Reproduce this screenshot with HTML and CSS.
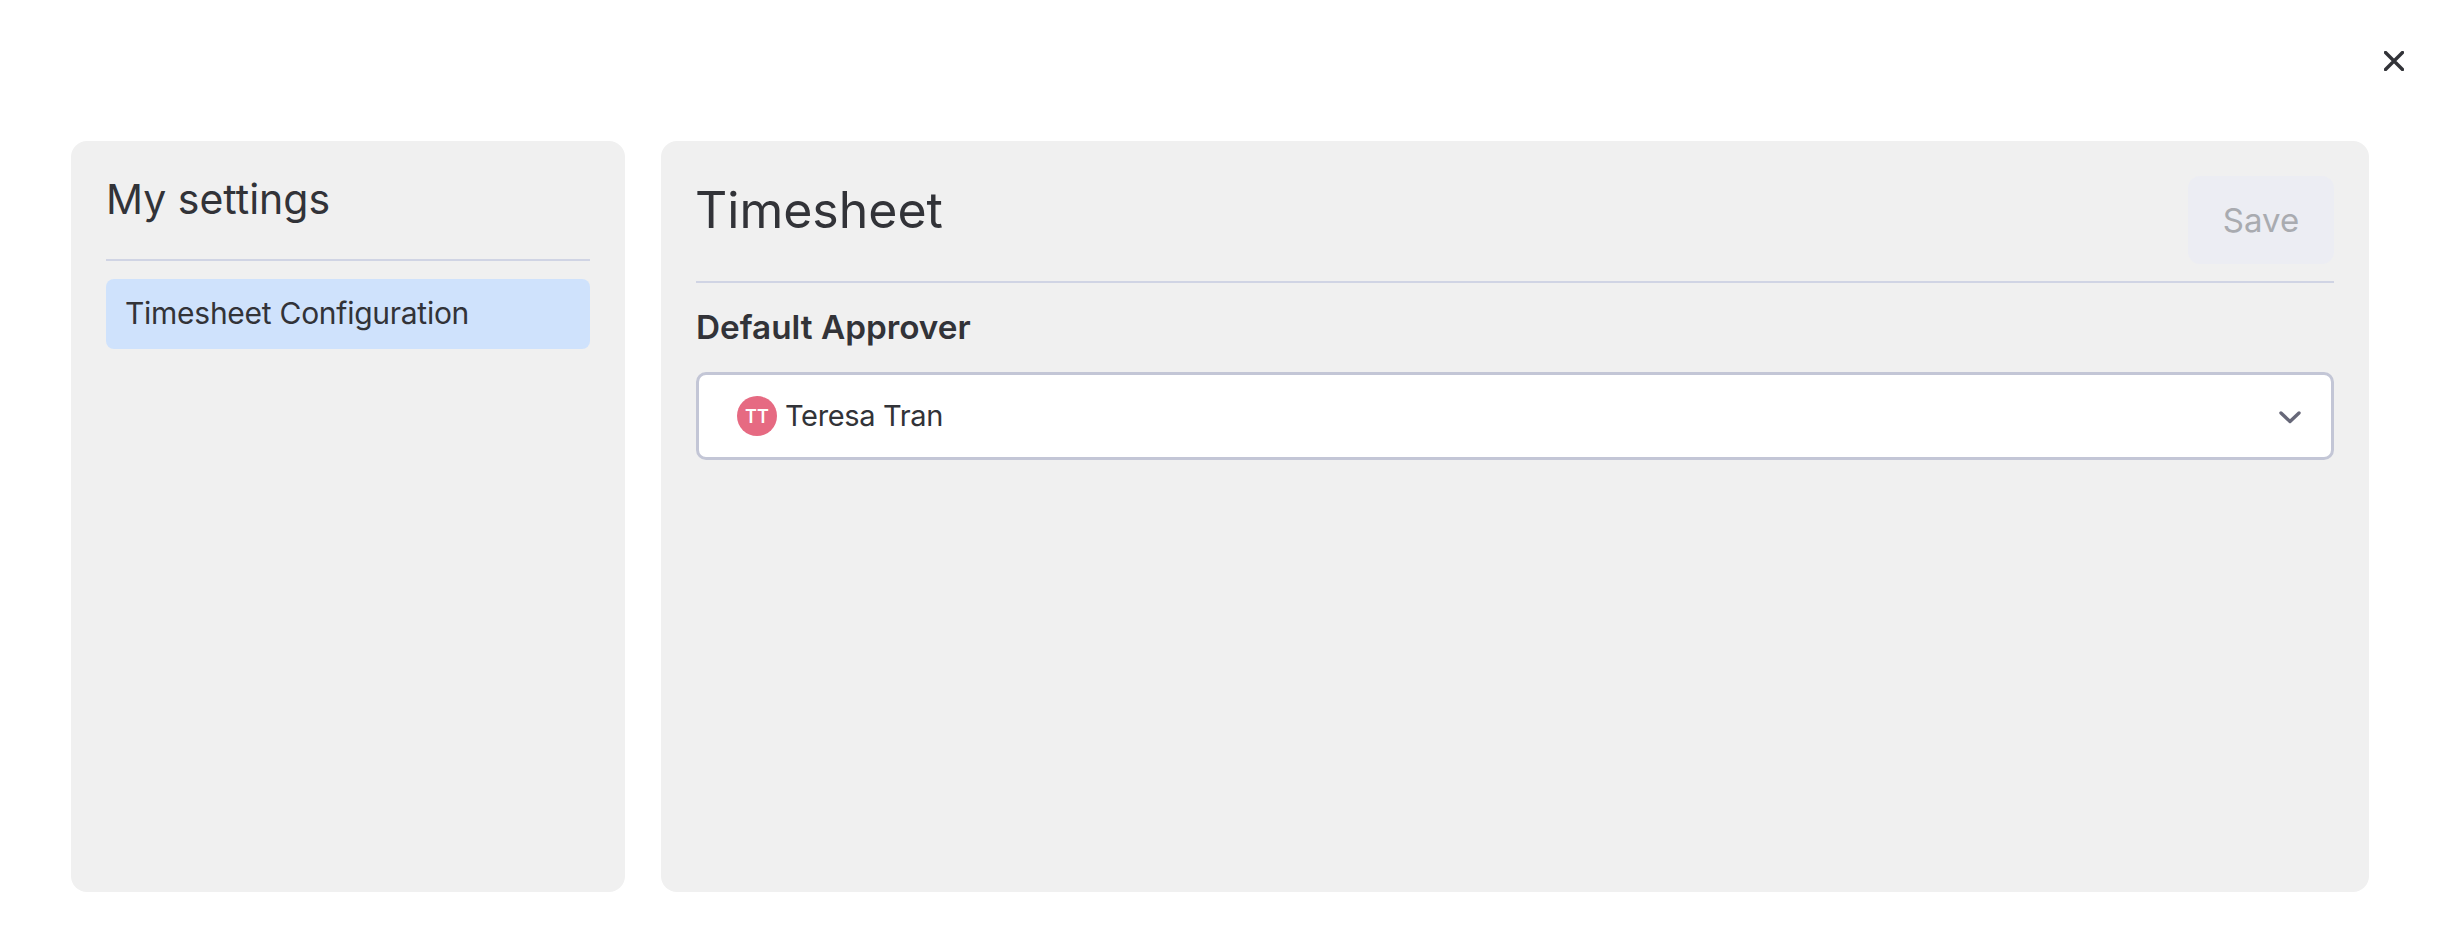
FILE: index.html
```html
<!doctype html>
<html lang="en">
<head>
<title>My settings</title>
<meta charset="UTF-8">
<link rel="stylesheet" href="styles.css">
</head>
<body>

<div class="topbar">
  <button class="close" aria-label="Close">
    <svg width="20" height="20" viewBox="0 0 20 20"><path d="M1.5 1.5L18.5 18.5M18.5 1.5L1.5 18.5"/></svg>
  </button>
</div>

<div class="panels">
  <div class="panel side">
    <h2 class="side-title">My settings</h2>
    <div class="side-item">Timesheet Configuration</div>
  </div>

  <div class="panel main">
    <div class="main-head">
      <h1 class="main-title">Timesheet</h1>
      <button class="save" disabled>Save</button>
    </div>
    <div class="field-label">Default Approver</div>
    <div class="select">
      <span class="avatar">TT</span>
      <span class="select-name">Teresa Tran</span>
      <svg class="chevron" width="22" height="13" viewBox="0 0 22 13"><path d="M2 2L11 10.5L20 2"/></svg>
    </div>
  </div>
</div>

</body>
</html>
```

FILE: styles.css
```css
* {
  box-sizing: border-box;
}

body {
  margin: 0;
  height: 944px;
  background: #fff;
  color: #323338;
  font-family: "Inter", "Liberation Sans", sans-serif;
  display: flex;
  flex-direction: column;
  overflow: hidden;
}

.topbar {
  height: 141px;
  flex: none;
  display: flex;
  justify-content: flex-end;
  align-items: flex-start;
  padding: 51px 36px 0 0;
}

.close {
  border: 0;
  padding: 0;
  background: none;
  width: 20px;
  height: 20px;
  display: flex;
}

.close path {
  fill: none;
  stroke: #323338;
  stroke-width: 3.4;
  stroke-linecap: round;
}

.panels {
  flex: 1;
  display: flex;
  gap: 36px;
  padding: 0 71px 52px 71px;
  min-height: 0;
}

.panel {
  background: #f0f0f0;
  border-radius: 16px;
}

.side {
  width: 554px;
  flex: none;
  padding: 0 35px;
}

.side-title {
  margin: 0;
  height: 120px;
  border-bottom: 2px solid #d0d4e4;
  font-size: 41px;
  font-weight: 400;
  line-height: 117px;
}

.side-item {
  margin-top: 18px;
  height: 70px;
  background: #cfe2fc;
  border-radius: 8px;
  padding-left: 19px;
  font-size: 30px;
  letter-spacing: -0.27px;
  line-height: 69px;
}

.main {
  flex: 1;
  padding: 35px 35px 0 35px;
}

.main-head {
  height: 107px;
  border-bottom: 2px solid #d0d4e4;
  display: flex;
  justify-content: space-between;
  align-items: flex-start;
}

.main-title {
  margin: 0 0 0 -1px;
  font-size: 50px;
  font-weight: 400;
  line-height: 68px;
}

.save {
  width: 146px;
  height: 88px;
  border: 0;
  border-radius: 12px;
  background: #ecedf3;
  color: #a9abb0;
  font-family: inherit;
  font-size: 33px;
}

.field-label {
  margin-top: 22px;
  font-size: 33.3px;
  font-weight: 600;
  line-height: 44px;
}

.select {
  margin-top: 23px;
  height: 88px;
  background: #fff;
  border: 3px solid #c3c6d6;
  border-radius: 10px;
  display: flex;
  align-items: center;
  padding: 0 30px 0 38px;
}

.avatar {
  width: 40px;
  height: 40px;
  border-radius: 50%;
  background: #e66a82;
  color: #fff;
  font-size: 18px;
  font-weight: 600;
  display: flex;
  align-items: center;
  justify-content: center;
}

.select-name {
  margin: 0 0 2px 8px;
  font-size: 29px;
  letter-spacing: -0.35px;
  flex: 1;
}

.chevron {
  margin-top: 2px;
}

.chevron path {
  fill: none;
  stroke: #676879;
  stroke-width: 3.4;
  stroke-linecap: round;
  stroke-linejoin: round;
}
```
